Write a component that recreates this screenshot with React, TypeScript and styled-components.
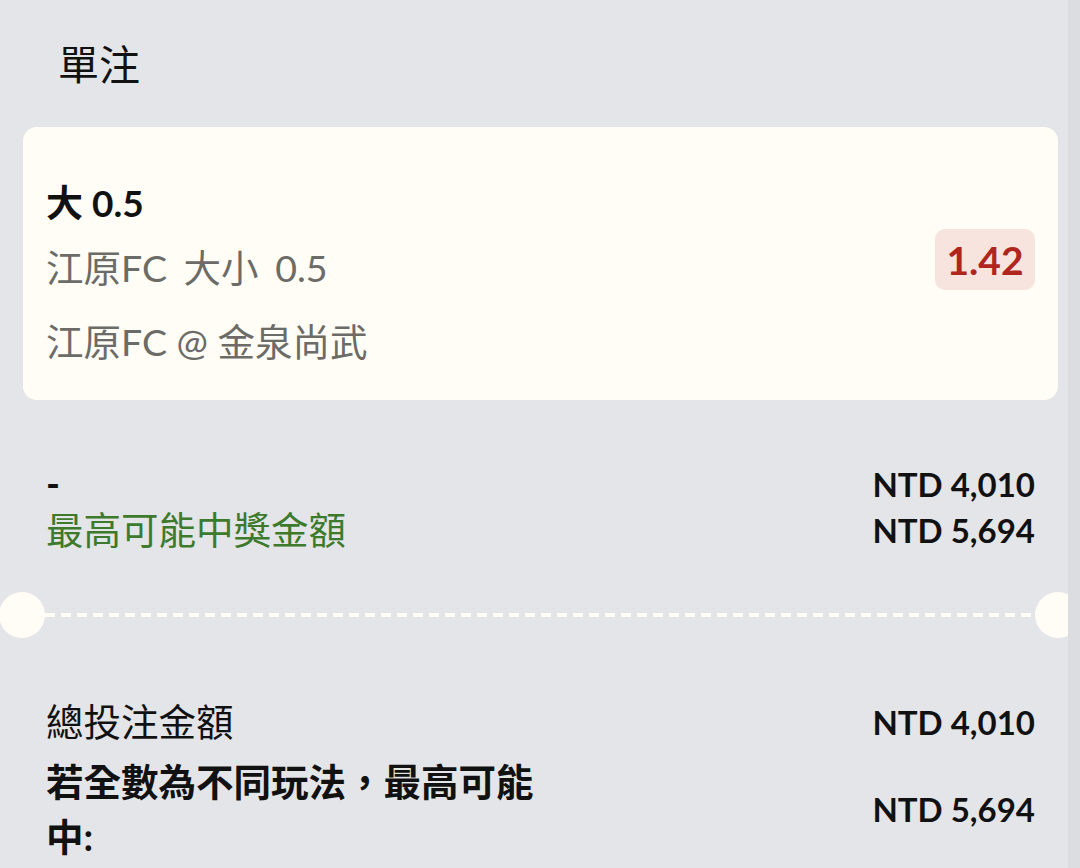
import React from 'react';
import styled, { createGlobalStyle } from 'styled-components';

const GlobalStyle = createGlobalStyle`
  html, body {
    margin: 0;
    padding: 0;
    background: #e4e5e8;
  }

  body {
    font-family: Lato, 'Noto Sans CJK TC', sans-serif;
    color: #111;
  }
`;

interface BetSlip {
  pick: string;
  market: string;
  match: string;
  odds: string;
}

const slip: BetSlip = {
  pick: '大 0.5',
  market: '江原FC 大小 0.5',
  match: '江原FC @ 金泉尚武',
  odds: '1.42',
};

function App() {
  return (
    <>
      <GlobalStyle />
      <Screen>
        <Panel>
          <Title>單注</Title>

          <Card>
            <Info>
              <Pick>{slip.pick}</Pick>
              <Market>{slip.market}</Market>
              <Match>{slip.match}</Match>
            </Info>
            <Odds>{slip.odds}</Odds>
          </Card>

          <Summary>
            <Row>
              <Label bold>-</Label>
              <Amount>NTD 4,010</Amount>
            </Row>
            <Row>
              <Label tone="green">最高可能中獎金額</Label>
              <Amount>NTD 5,694</Amount>
            </Row>
          </Summary>

          <Divider>
            <Notch side="left" />
            <Dashes />
            <Notch side="right" />
          </Divider>

          <Totals>
            <Row>
              <Label>總投注金額</Label>
              <Amount>NTD 4,010</Amount>
            </Row>
            <Row className="wrap">
              <Label bold>若全數為不同玩法，最高可能中:</Label>
              <Amount>NTD 5,694</Amount>
            </Row>
          </Totals>
        </Panel>
        <Rail />
      </Screen>
    </>
  );
}

const Screen = styled.div`
  display: flex;
  width: 1080px;
  height: 868px;
  overflow: hidden;
`;

const Panel = styled.div`
  width: 1068px;
  flex: none;
  overflow: hidden;
`;

const Rail = styled.div`
  flex: 1;
  background: #dcdde0;
`;

const Title = styled.h1`
  margin: 37px 0 0 58px;
  font-size: 41px;
  line-height: 56px;
  font-weight: 400;
  color: #111;
`;

const Card = styled.section`
  margin: 34px 10px 0 23px;
  height: 273px;
  box-sizing: border-box;
  padding: 0 23px;
  display: flex;
  align-items: center;
  justify-content: space-between;
  background: #fffdf5;
  border-radius: 14px;
`;

const Info = styled.div`
  display: flex;
  flex-direction: column;
  align-self: flex-start;
  padding-top: 53px;
  font-size: 37.5px;
  line-height: 46px;
`;

const Pick = styled.div`
  font-size: 37px;
  font-weight: 700;
  color: #111;
`;

const Market = styled.div`
  margin-top: 19px;
  color: #6b6b68;
  word-spacing: 7px;
`;

const Match = styled.div`
  margin-top: 28px;
  color: #6b6b68;
`;

const Odds = styled.div`
  width: 100px;
  height: 61px;
  margin-bottom: 8px;
  display: flex;
  align-items: center;
  justify-content: center;
  box-sizing: border-box;
  border-radius: 10px;
  background: #f7e4de;
  color: #b0261f;
  font-size: 39px;
  font-weight: 700;
`;

const Summary = styled.section`
  margin: 61px 33px 0 46px;
`;

const Totals = styled.section`
  margin: 61px 33px 0 46px;

  > .wrap {
    margin-top: 9px;
    line-height: 55px;
  }
`;

const Row = styled.div`
  display: flex;
  align-items: center;
  justify-content: space-between;
  line-height: 46px;
`;

const Label = styled.div<{ tone?: 'green'; bold?: boolean }>`
  max-width: 500px;
  font-size: 37.5px;
  color: ${(p) => (p.tone === 'green' ? '#3d7a2c' : '#111')};
  font-weight: ${(p) => (p.bold ? 700 : 400)};
`;

const Amount = styled.div`
  font-size: 33px;
  font-weight: 700;
  color: #111;
  white-space: nowrap;
`;

const Divider = styled.div`
  margin-top: 39px;
  display: flex;
  align-items: center;
`;

const Notch = styled.div<{ side: 'left' | 'right' }>`
  flex: none;
  width: 46px;
  height: 46px;
  border-radius: 50%;
  background: #fffdf5;
  margin-left: ${(p) => (p.side === 'left' ? '-1px' : '0')};
  margin-right: ${(p) => (p.side === 'right' ? '-13px' : '0')};
`;

const Dashes = styled.div`
  flex: 1;
  height: 4px;
  background: repeating-linear-gradient(
    to right,
    #fffdf5 0 10px,
    transparent 10px 16px
  );
`;

export default App;
